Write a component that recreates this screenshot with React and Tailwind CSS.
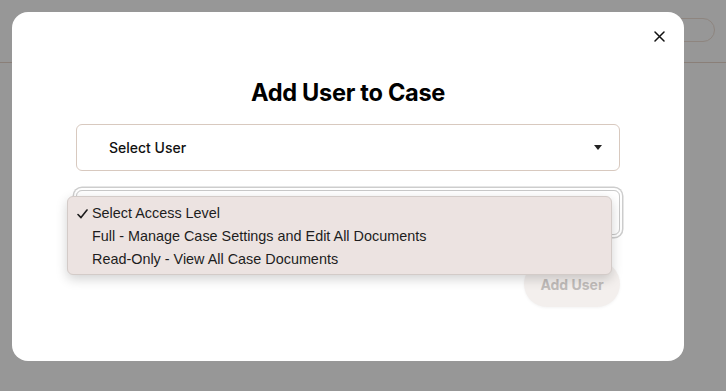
import React from "react";

export default function App() {
  return (
    <div className="relative w-[726px] h-[391px] overflow-hidden bg-[#979797]" style={{ fontFamily: "Inter, 'Liberation Sans', sans-serif" }}>
      {/* dimmed page behind */}
      <div className="h-[63px] border-b border-[#8a7f78] flex justify-end items-start pt-[18px] pr-[11px]">
        <div className="w-[78px] h-[24px] rounded-full border border-[#8e857f]" />
      </div>

      {/* modal */}
      <div className="absolute left-[12px] top-[12px] w-[672px] h-[349px] rounded-[16px] bg-white px-[64px] pt-[65px]">
        <button className="absolute left-[641px] top-[18px] w-[12px] h-[12px] flex items-center justify-center text-[#111]">
          <svg width="11" height="11" viewBox="0 0 11 11" fill="none" stroke="currentColor" strokeWidth="1.5" strokeLinecap="round">
            <path d="M1 1 L10 10 M10 1 L1 10" />
          </svg>
        </button>

        <h2 className="text-center text-[23.6px] leading-[32px] font-bold text-black tracking-[-0.3px]">Add User to Case</h2>

        <div className="mt-[15px] h-[47px] rounded-[6px] border border-[#d8c9bf] flex items-center pl-[32px] pr-[17px]">
          <span className="flex-1 text-[14px] font-medium text-[#111]">Select User</span>
          <svg width="8" height="5" viewBox="0 0 8 5"><path d="M0 0 H8 L4 5 Z" fill="#222" /></svg>
        </div>

        <div className="mt-[19px] h-[45px] rounded-[6px] border border-[#c9c9c9] shadow-[0_0_0_2px_#ffffff,0_0_0_3.5px_#cdcdcd]" />

        <div className="flex justify-end mt-[26px]">
          <button className="w-[96px] h-[46px] rounded-full bg-[#f3efed] text-[14px] font-bold text-[#c0bcba] shadow-[0_1px_3px_rgba(0,0,0,0.05)]">Add User</button>
        </div>
      </div>

      {/* open select menu */}
      <div className="absolute left-[67px] top-[196px] w-[545px] h-[79px] rounded-[6px] bg-[#ece3e1] border border-[#d3cbc8] shadow-[0_4px_12px_rgba(0,0,0,0.18)] pt-[5px] text-[14.4px] leading-[23px] text-[#1d1d1d]" style={{ fontFamily: "'Liberation Sans', Arial, sans-serif" }}>
        <div className="flex items-center">
          <span className="w-[24px] pl-[9px] flex items-center">
            <svg width="11" height="10" viewBox="0 0 11 10" fill="none" stroke="#1d1d1d" strokeWidth="1.6" strokeLinecap="round" strokeLinejoin="round">
              <path d="M1 5.5 L4 8.6 L10 1" />
            </svg>
          </span>
          <span>Select Access Level</span>
        </div>
        <div className="pl-[24px]">Full - Manage Case Settings and Edit All Documents</div>
        <div className="pl-[24px]">Read-Only - View All Case Documents</div>
      </div>
    </div>
  );
}
